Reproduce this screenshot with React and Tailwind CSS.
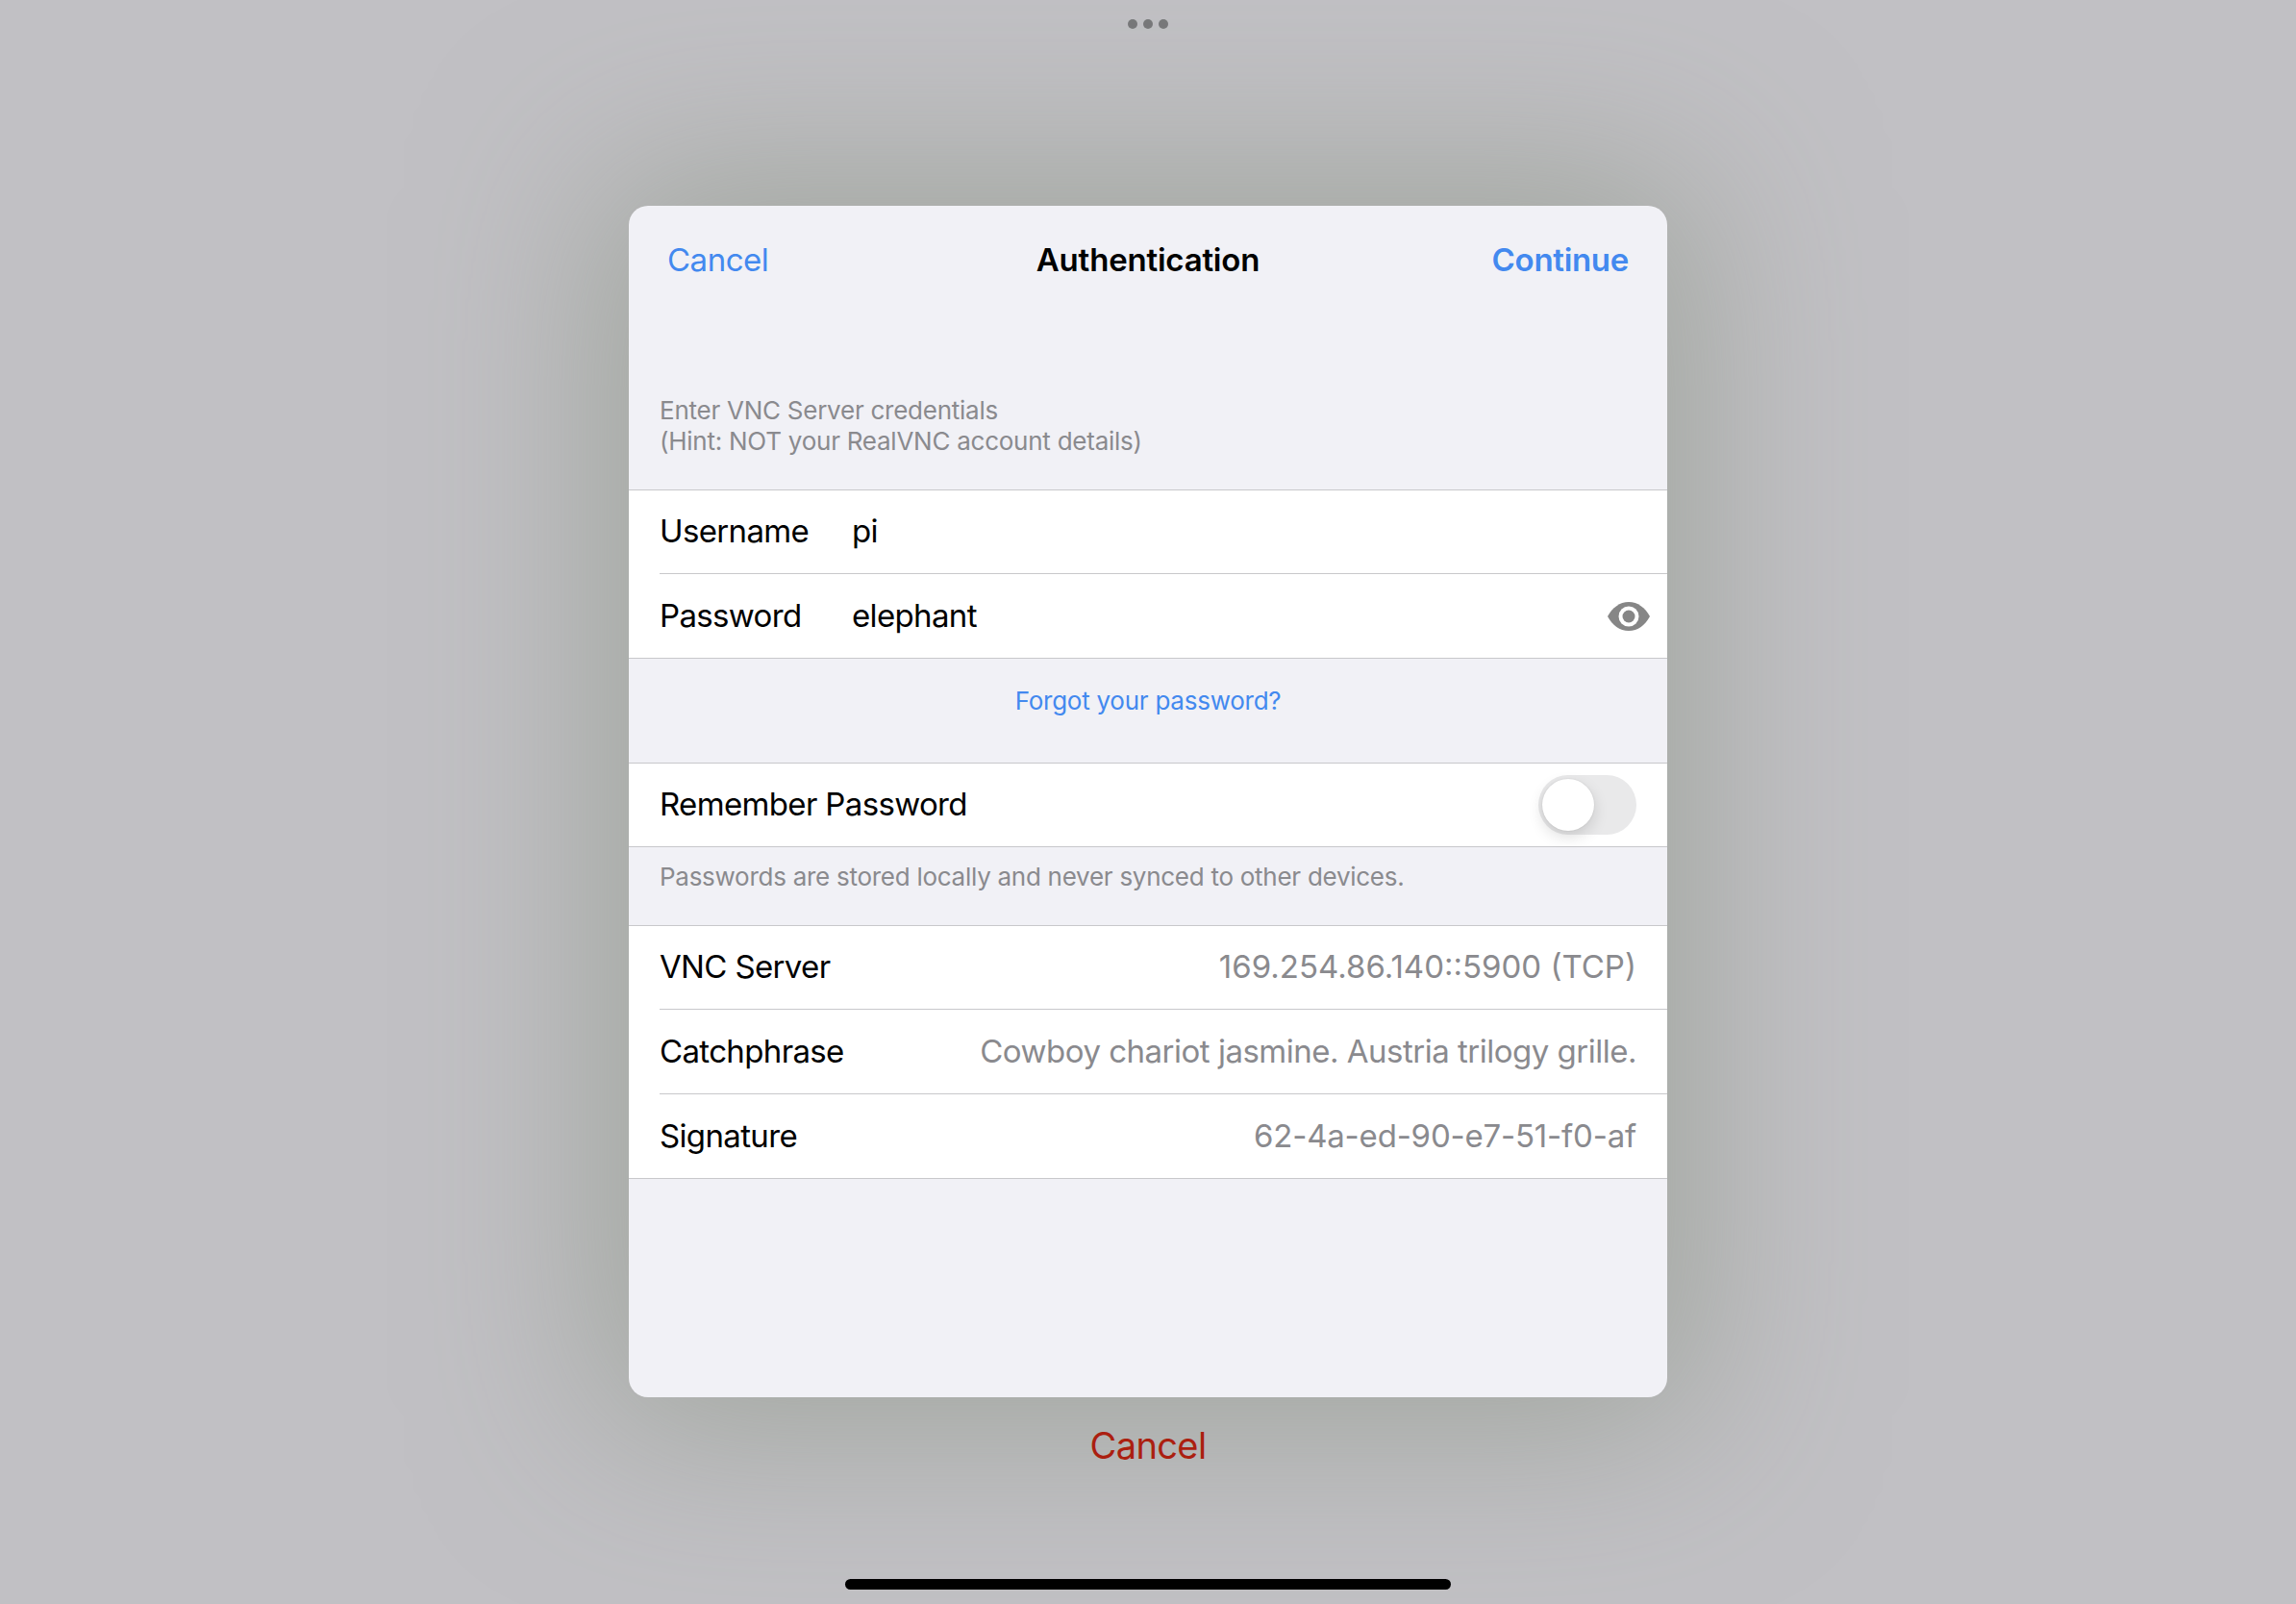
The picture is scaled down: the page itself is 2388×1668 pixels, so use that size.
import React from "react";

const font = "font-['Inter','Liberation_Sans',sans-serif]";

function Row({ label, value, inset, className, valueClass, children }) {
  return (
    <div className={`relative flex items-center bg-white pl-8 ${className}`}>
      <div className={`flex h-full flex-1 items-center pr-8 ${inset ? "border-b border-[#c8c8cb]" : ""}`}>
        <span className="text-[33px] tracking-[-0.65px] text-black">{label}</span>
        {value && <span className={`ml-auto text-[33px] text-[#8a8a8e] ${valueClass}`}>{value}</span>}
        {children}
      </div>
    </div>
  );
}

function EyeIcon() {
  return (
    <svg width="44" height="30" viewBox="0 0 44 30" className="ml-auto mr-[-14px]">
      <path
        d="M0 15C5 6 12.500 0 22 0S39 6 44 15C39 24 31.500 30 22 30S5 24 0 15Z"
        fill="#868686"
      />
      <circle cx="22" cy="15" r="10.500" fill="#fff" />
      <circle cx="22" cy="15" r="6.500" fill="#868686" />
    </svg>
  );
}

function Toggle() {
  return (
    <div className="ml-auto flex h-[62px] w-[102px] items-center rounded-full bg-[#e9e9ea] pl-1">
      <div className="h-[54px] w-[54px] rounded-full bg-white shadow-[0_6px_16px_rgba(0,0,0,0.14),0_0_2px_rgba(0,0,0,0.1)]" />
    </div>
  );
}

export default function App() {
  return (
    <div className={`${font} flex h-[1668px] w-[2388px] flex-col items-center overflow-hidden bg-[#c1c0c4]`}>
      <div className="flex h-[214px] w-full justify-center gap-[6px] pt-[20px]">
        <div className="h-[10px] w-[10px] rounded-full bg-[#777779]" />
        <div className="h-[10px] w-[10px] rounded-full bg-[#777779]" />
        <div className="h-[10px] w-[10px] rounded-full bg-[#777779]" />
      </div>

      <div className="flex h-[1239px] w-[1080px] flex-col rounded-[20px] bg-[#f1f1f6] shadow-[0_0_185px_30px_rgba(150,156,145,0.75)]">
        <div className="grid h-[114px] grid-cols-[1fr_auto_1fr] items-center px-10 text-[33px]">
          <span className="tracking-[-0.5px] text-[#4389ef]">Cancel</span>
          <span className="font-semibold tracking-[-0.2px] text-black">Authentication</span>
          <span className="text-right font-semibold tracking-[-0.3px] text-[#4389ef]">Continue</span>
        </div>

        <div className="flex h-[182px] flex-col justify-end border-b border-[#c8c8cb] px-8 pb-[34px] text-[26px] leading-[32px] tracking-[-0.25px] text-[#8a8a8e]">
          <div>Enter VNC Server credentials</div>
          <div>(Hint: NOT your RealVNC account details)</div>
        </div>

        <Row label="Username" inset className="h-[88px] pb-[1px]">
          <span className="absolute left-[232px] text-[33px] tracking-[-0.65px] text-black">pi</span>
        </Row>
        <Row label="Password" className="h-[86px]">
          <span className="absolute left-[232px] text-[33px] tracking-[-0.65px] text-black">elephant</span>
          <EyeIcon />
        </Row>

        <div className="h-[110px] border-y border-[#c8c8cb] pt-[28px] text-center text-[26px] leading-[32px] tracking-[-0.25px] text-[#4389ef]">
          Forgot your password?
        </div>

        <Row label="Remember Password" className="h-[86px]">
          <Toggle />
        </Row>

        <div className="h-[83px] border-y border-[#c8c8cb] px-8 pt-[15px] text-[26px] leading-[32px] tracking-[-0.27px] text-[#8a8a8e]">
          Passwords are stored locally and never synced to other devices.
        </div>

        <Row label="VNC Server" value="169.254.86.140::5900 (TCP)" inset className="h-[87px]" valueClass="tracking-normal" />
        <Row label="Catchphrase" value="Cowboy chariot jasmine. Austria trilogy grille." inset className="h-[88px]" valueClass="tracking-[-0.5px]" />
        <Row label="Signature" value="62-4a-ed-90-e7-51-f0-af" className="h-[87px]" valueClass="tracking-[-0.2px]" />
        <div className="border-t border-[#c8c8cb]" />
      </div>

      <div className="relative flex h-[100px] items-center text-[38px] tracking-[-0.6px] text-[#ab1f10]">
        Cancel
      </div>
      <div className="relative mt-[89px] h-[11px] w-[630px] rounded-full bg-black" />
    </div>
  );
}
